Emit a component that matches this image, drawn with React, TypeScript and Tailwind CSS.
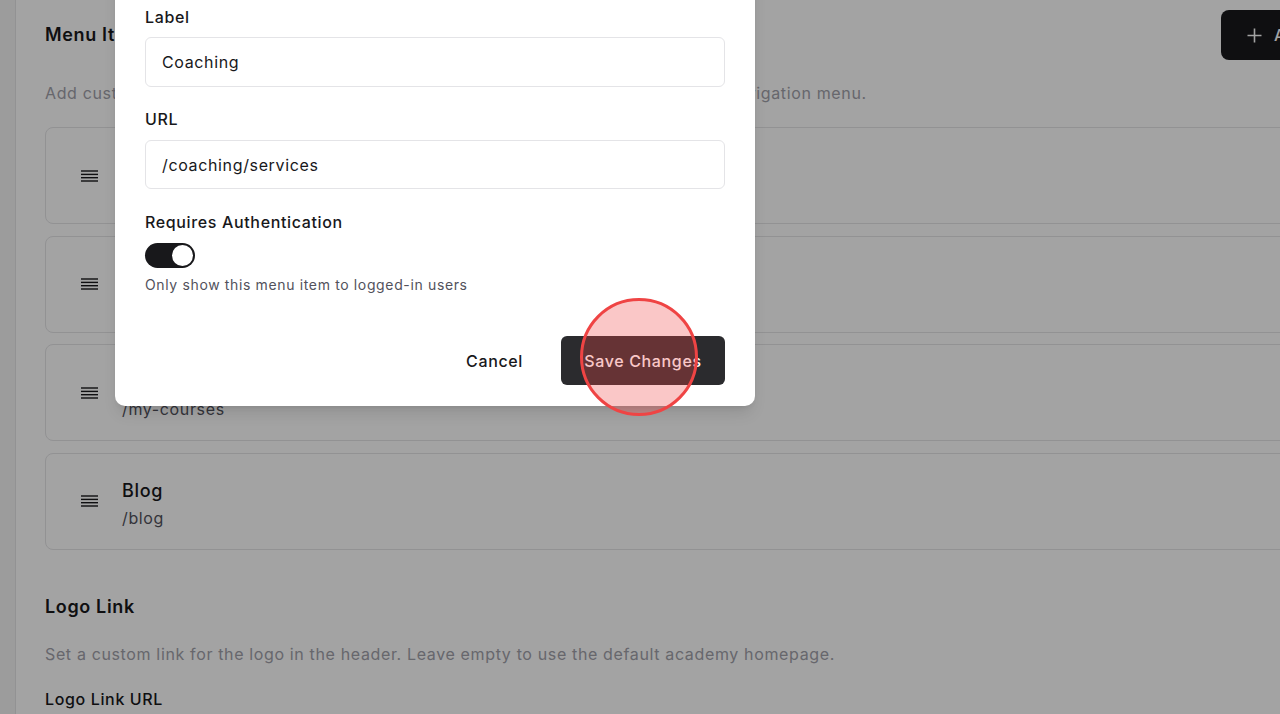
import React from "react";

function DragIcon() {
  return (
    <svg width="17" height="12" viewBox="0 0 17 12" className="shrink-0 text-zinc-900">
      <line x1="0" y1="1" x2="17" y2="1" stroke="currentColor" strokeWidth="1.4" />
      <line x1="0" y1="4.4" x2="17" y2="4.4" stroke="currentColor" strokeWidth="1.4" />
      <line x1="0" y1="7.7" x2="17" y2="7.7" stroke="currentColor" strokeWidth="1.4" />
      <line x1="0" y1="11" x2="17" y2="11" stroke="currentColor" strokeWidth="1.4" />
    </svg>
  );
}

const items = [
  { label: "Home", url: "/" },
  { label: "Courses", url: "/courses" },
  { label: "My Courses", url: "/my-courses" },
  { label: "Blog", url: "/blog" },
];

export default function App() {
  return (
    <div className="relative w-[1280px] h-[714px] overflow-hidden bg-white font-['Inter',sans-serif] tracking-[0.04em] text-zinc-900">
      <div className="flex h-full">
        <div className="w-[16px] shrink-0 bg-[#f4f4f5] border-r border-[#e4e4e7]" />
        <main className="w-[1440px] shrink-0 pl-[29px] pt-[10px]">
          <div className="flex items-center justify-between h-[50px] w-[1356px]">
            <h2 className="text-[18px] leading-[28px] font-semibold">Menu Items</h2>
            <button className="flex items-center gap-[12px] h-[50px] w-[180px] px-[26px] rounded-lg bg-zinc-900 text-white text-[16px] font-medium">
              <svg width="15" height="15" viewBox="0 0 15 15" className="shrink-0">
                <path d="M7.5 0.5v14M0.5 7.5h14" stroke="currentColor" strokeWidth="1.6" />
              </svg>
              Add Item
            </button>
          </div>
          <p className="mt-[21px] text-[16px] leading-[24px] text-[#a1a1aa]">
            Add custom links to the header of your academy. Drag items to reorder them in the navigation menu.
          </p>
          <div className="mt-[22px] flex flex-col gap-[11.5px] w-[1400px]">
            {items.map((it) => (
              <div
                key={it.label}
                className="h-[97px] flex items-center gap-[24px] pl-[35px] rounded-lg border border-[#e4e4e7]"
              >
                <DragIcon />
                <div className="flex flex-col mt-[4px]">
                  <span className="text-[18px] leading-[28px] font-medium">{it.label}</span>
                  <span className="mt-[1px] text-[16px] leading-[24px] text-zinc-600">{it.url}</span>
                </div>
              </div>
            ))}
          </div>
          <h2 className="mt-[43px] text-[18px] leading-[28px] font-semibold">Logo Link</h2>
          <p className="mt-[21px] text-[16px] leading-[24px] text-[#a1a1aa]">
            Set a custom link for the logo in the header. Leave empty to use the default academy homepage.
          </p>
          <p className="mt-[21px] text-[16px] leading-[24px] font-medium">Logo Link URL</p>
        </main>
      </div>

      <div className="absolute inset-0 bg-black/[0.36]" />

      <div className="absolute left-[115px] top-[-80px] w-[640px] rounded-[10px] bg-white shadow-lg px-[30px] pt-[30px] pb-[21px]">
        <h3 className="text-[18px] leading-[28px] font-semibold">Edit Menu Item</h3>
        <div className="mt-[27px] flex flex-col">
          <label className="text-[16px] leading-[24px] font-medium">Label</label>
          <div className="mt-[8px] h-[50px] flex items-center px-[16px] rounded-md border border-[#e4e4e7] text-[16px]">
            Coaching
          </div>
          <label className="mt-[20px] text-[16px] leading-[24px] font-medium">URL</label>
          <div className="mt-[9px] h-[49px] flex items-center px-[16px] rounded-md border border-[#e4e4e7] text-[16px]">
            /coaching/services
          </div>
          <label className="mt-[21px] text-[16px] leading-[24px] font-medium">Requires Authentication</label>
          <div className="mt-[9px] w-[50px] h-[25px] rounded-full bg-zinc-900 flex items-center justify-end px-[2px]">
            <div className="w-[21px] h-[21px] rounded-full bg-white" />
          </div>
          <p className="mt-[7px] text-[14px] leading-[20px] text-zinc-600">
            Only show this menu item to logged-in users
          </p>
          <div className="mt-[41px] flex justify-end items-center gap-[14px]">
            <button className="h-[49px] px-[24px] rounded-md text-[16px] font-medium text-zinc-900">Cancel</button>
            <button className="h-[49px] w-[164px] rounded-md bg-[#2b2b2e] text-white text-[16px] font-medium">
              Save Changes
            </button>
          </div>
        </div>
      </div>

      <div className="absolute left-[580px] top-[298px] w-[118px] h-[118px] rounded-full border-[3px] border-[#ef4444] bg-[#ef4444]/30" />
    </div>
  );
}
